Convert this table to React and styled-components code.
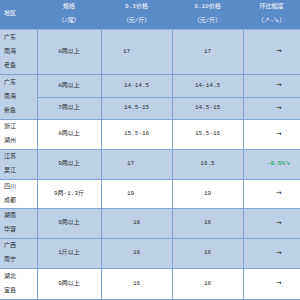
import React from 'react'
import styled, { createGlobalStyle } from 'styled-components'

const Global = createGlobalStyle`
  html, body { margin: 0; padding: 0; background: #fff; }
  body { font-family: "Liberation Mono", "Noto Sans CJK SC", monospace; }
`

const Table = styled.table`
  width: 300px;
  table-layout: fixed;
  border-collapse: collapse;
  font-size: 6px;
  color: #2b2b2b;
`

const Row = styled.tr`
  height: ${p => p.h}px;
  background: ${p => (p.light ? '#bdd0e8' : '#fff')};
`

const HeadRow = styled.tr`
  height: 29px;
  background: #5b8bc7;
  color: #fff;
`

const Th = styled.th`
  font-weight: normal;
  line-height: 14px;
  padding: 0;
  text-align: ${p => (p.left ? 'left' : 'center')};
  padding-left: ${p => (p.left ? '4px' : '0')};
  border-bottom: 1px solid #8eafd9;
`

const Cell = styled.td`
  padding: 0;
  line-height: 14px;
  text-align: center;
  vertical-align: middle;
  border: 1px solid #7fa3d3;
  border-top: none;
  &:first-child { border-left: none; }
  &:last-child { border-right: none; }
`

const Place = styled(Cell)`
  text-align: left;
  padding-left: 4px;
`

const Value = styled.span`
  display: inline-block;
  margin-right: ${p => p.shift || 0}px;
`

const Trend = styled.span`
  display: inline-block;
  margin-left: 14px;
  font-family: ${p => (p.down ? '"Liberation Mono", "DejaVu Sans", monospace' : '"DejaVu Sans", sans-serif')};
  font-size: ${p => (p.down ? '6px' : '7px')};
  color: ${p => (p.down ? '#1faf5c' : '#222')};
  font-weight: ${p => (p.down ? 'bold' : 'normal')};
`

const rows = [
  { place: ['广东', '南海', '老鱼'], spec: '8两以上', p1: '17', s1: 20, p2: '17', trend: '→', h: 45, light: true },
  { place: ['广东', '南海', '新鱼'], span: 2, spec: '8两以上', p1: '14-14.5', p2: '14-14.5', trend: '→', h: 23, light: true },
  { spec: '7两以上', p1: '14.5-15', p2: '14.5-15', trend: '→', h: 22, light: true },
  { place: ['浙江', '湖州'], spec: '8两以上', p1: '15.5-16', p2: '15.5-16', trend: '→', h: 30 },
  { place: ['江苏', '吴江'], spec: '9两以上', p1: '17', s1: 12, p2: '16.5', trend: '-0.5%↘', down: true, h: 30, light: true },
  { place: ['四川', '成都'], spec: '9两-1.3斤', p1: '19', s1: 12, p2: '19', trend: '→', h: 29 },
  { place: ['湖南', '华容'], spec: '9两以上', p1: '16', p2: '16', trend: '→', h: 30, light: true },
  { place: ['广西', '南宁'], spec: '1斤以上', p1: '16', p2: '16', trend: '→', h: 30, light: true },
  { place: ['湖北', '宜昌'], spec: '9两以上', p1: '16', p2: '16', trend: '→', h: 31 },
]

export default function App() {
  return (
    <>
      <Global />
      <Table>
        <colgroup>
          <col style={{ width: 37 }} />
          <col style={{ width: 64 }} />
          <col style={{ width: 71 }} />
          <col style={{ width: 71 }} />
          <col style={{ width: 57 }} />
        </colgroup>
        <thead>
          <HeadRow>
            <Th left>地区</Th>
            <Th>规格<br />（/尾）</Th>
            <Th>9.3价格<br />（元/斤）</Th>
            <Th>9.10价格<br />（元/斤）</Th>
            <Th>环比幅度<br />（↗→↘）</Th>
          </HeadRow>
        </thead>
        <tbody>
          {rows.map((r, i) => (
            <Row key={i} h={r.h} light={r.light}>
              {r.place && (
                <Place rowSpan={r.span || 1}>
                  {r.place.map((t, j) => <div key={j}>{t}</div>)}
                </Place>
              )}
              <Cell>{r.spec}</Cell>
              <Cell><Value shift={r.s1}>{r.p1}</Value></Cell>
              <Cell>{r.p2}</Cell>
              <Cell><Trend down={r.down}>{r.trend}</Trend></Cell>
            </Row>
          ))}
        </tbody>
      </Table>
    </>
  )
}
